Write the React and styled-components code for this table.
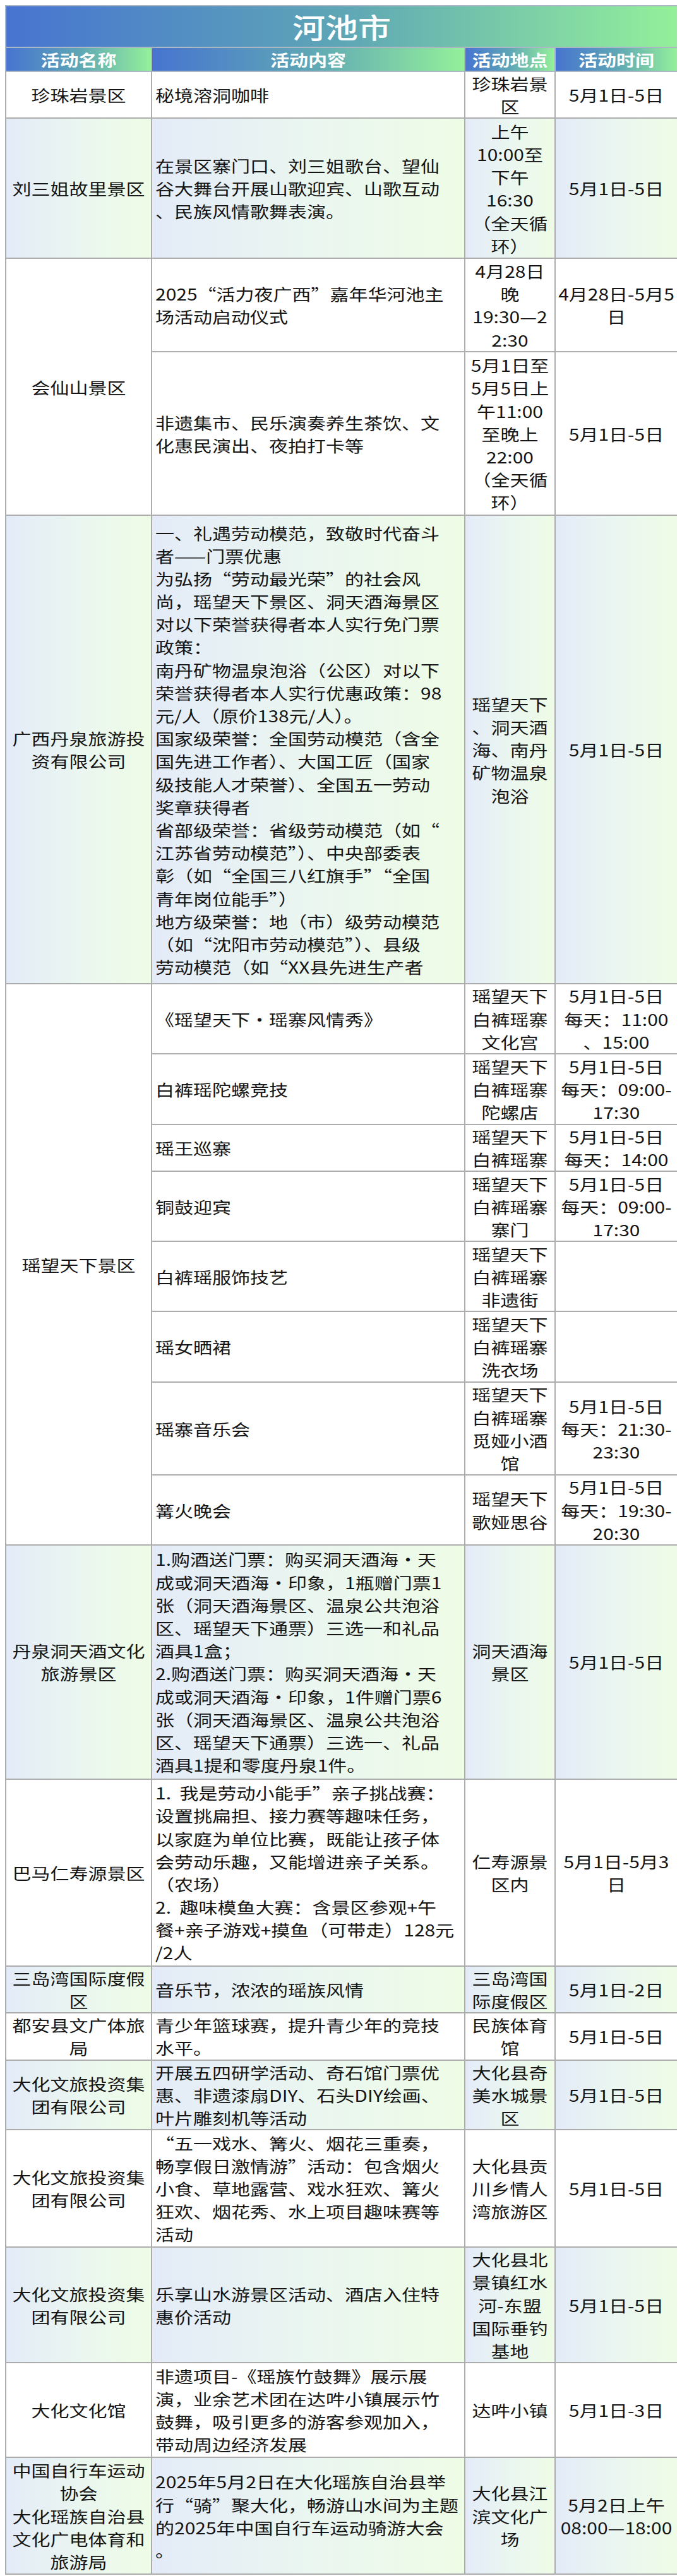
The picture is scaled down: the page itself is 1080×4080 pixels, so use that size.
import React from 'react';
import styled, { createGlobalStyle, css } from 'styled-components';

const GlobalStyle = createGlobalStyle`
  body {
    margin: 8px;
    background: #ffffff;
    font-family: "Noto Sans CJK SC", "Noto Sans", sans-serif;
  }
`;

const Sheet = styled.table`
  width: 1064px;
  table-layout: fixed;
  border-collapse: collapse;
  color: #141414;
`;

const headGradient = css`
  background: linear-gradient(90deg, #4774d0 0%, #5ea6b6 50%, #94f09a 100%);
`;

const TitleCell = styled.th`
  ${headGradient};
  padding: 0;
  border: 2px solid #a9b8c4;
  color: #ffffff;
  font-size: 52px;
  font-weight: 500;
  line-height: 60px;
`;

const HeadCell = styled.th`
  ${headGradient};
  padding: 0;
  border: 2px solid #a9b8c4;
  color: #ffffff;
  font-size: 30px;
  font-weight: 700;
  line-height: 34px;
`;

const Row = styled.tr`
  height: ${p => p.$h}px;
`;

const Cell = styled.td`
  padding: ${p => (p.$align === 'left' ? '0 0 0 5px' : '0 2px')};
  border: 2px solid #adadad;
  vertical-align: middle;
  text-align: ${p => p.$align || 'center'};
  font-size: 30px;
  background: ${p =>
    p.$tint ? 'linear-gradient(90deg, #e4ebf8 0%, #eaf6f0 50%, #eefce6 100%)' : '#ffffff'};
`;

const Line = styled.span`
  display: block;
  height: 36.2px;
  line-height: 36.2px;
  white-space: pre;
  transform: scaleY(0.85);
`;

const Squash = styled.span`
  display: inline-block;
  transform: scaleY(0.85);
`;

const Lines = ({ text }) =>
  text ? text.split('\n').map((l, i) => <Line key={i}>{l}</Line>) : null;

const groups = [
  {
    name: '珍珠岩景区',
    rows: [{ h: 74, content: '秘境溶洞咖啡', place: '珍珠岩景\n区', time: '5月1日-5日' }],
  },
  {
    name: '刘三姐故里景区',
    tint: true,
    rows: [
      {
        h: 222,
        content: '在景区寨门口、刘三姐歌台、望仙\n谷大舞台开展山歌迎宾、山歌互动\n、民族风情歌舞表演。',
        place: '上午\n10:00至\n下午\n16:30\n（全天循\n环）',
        time: '5月1日-5日',
      },
    ],
  },
  {
    name: '会仙山景区',
    rows: [
      {
        h: 148,
        content: '2025“活力夜广西”嘉年华河池主\n场活动启动仪式',
        place: '4月28日\n晚\n19:30—2\n2:30',
        time: '4月28日-5月5\n日',
      },
      {
        h: 259,
        content: '非遗集市、民乐演奏养生茶饮、文\n化惠民演出、夜拍打卡等',
        place: '5月1日至\n5月5日上\n午11:00\n至晚上\n22:00\n（全天循\n环）',
        time: '5月1日-5日',
      },
    ],
  },
  {
    name: '广西丹泉旅游投\n资有限公司',
    tint: true,
    rows: [
      {
        h: 742,
        content: [
          '一、礼遇劳动模范，致敬时代奋斗',
          '者——门票优惠',
          '为弘扬“劳动最光荣”的社会风',
          '尚，瑶望天下景区、洞天酒海景区',
          '对以下荣誉获得者本人实行免门票',
          '政策：',
          '南丹矿物温泉泡浴（公区）对以下',
          '荣誉获得者本人实行优惠政策：98',
          '元/人（原价138元/人）。',
          '国家级荣誉：全国劳动模范（含全',
          '国先进工作者）、大国工匠（国家',
          '级技能人才荣誉）、全国五一劳动',
          '奖章获得者',
          '省部级荣誉：省级劳动模范（如“',
          '江苏省劳动模范”）、中央部委表',
          '彰（如“全国三八红旗手”“全国',
          '青年岗位能手”）',
          '地方级荣誉：地（市）级劳动模范',
          '（如“沈阳市劳动模范”）、县级',
          '劳动模范（如“XX县先进生产者',
        ].join('\n'),
        place: '瑶望天下\n、洞天酒\n海、南丹\n矿物温泉\n泡浴',
        time: '5月1日-5日',
      },
    ],
  },
  {
    name: '瑶望天下景区',
    rows: [
      { h: 110, content: '《瑶望天下•瑶寨风情秀》', place: '瑶望天下\n白裤瑶寨\n文化宫', time: '5月1日-5日\n每天：11:00\n、15:00' },
      { h: 112, content: '白裤瑶陀螺竞技', place: '瑶望天下\n白裤瑶寨\n陀螺店', time: '5月1日-5日\n每天：09:00-\n17:30' },
      { h: 73, content: '瑶王巡寨', place: '瑶望天下\n白裤瑶寨', time: '5月1日-5日\n每天：14:00' },
      { h: 111, content: '铜鼓迎宾', place: '瑶望天下\n白裤瑶寨\n寨门', time: '5月1日-5日\n每天：09:00-\n17:30' },
      { h: 111, content: '白裤瑶服饰技艺', place: '瑶望天下\n白裤瑶寨\n非遗街', time: '' },
      { h: 112, content: '瑶女晒裙', place: '瑶望天下\n白裤瑶寨\n洗衣场', time: '' },
      { h: 147, content: '瑶寨音乐会', place: '瑶望天下\n白裤瑶寨\n觅娅小酒\n馆', time: '5月1日-5日\n每天：21:30-\n23:30' },
      { h: 110, content: '篝火晚会', place: '瑶望天下\n歌娅思谷', time: '5月1日-5日\n每天：19:30-\n20:30' },
    ],
  },
  {
    name: '丹泉洞天酒文化\n旅游景区',
    tint: true,
    rows: [
      {
        h: 371,
        content: [
          '1.购酒送门票：购买洞天酒海·天',
          '成或洞天酒海·印象，1瓶赠门票1',
          '张（洞天酒海景区、温泉公共泡浴',
          '区、瑶望天下通票）三选一和礼品',
          '酒具1盒；',
          '2.购酒送门票：购买洞天酒海·天',
          '成或洞天酒海·印象，1件赠门票6',
          '张（洞天酒海景区、温泉公共泡浴',
          '区、瑶望天下通票）三选一、礼品',
          '酒具1提和零度丹泉1件。',
        ].join('\n'),
        place: '洞天酒海\n景区',
        time: '5月1日-5日',
      },
    ],
  },
  {
    name: '巴马仁寿源景区',
    rows: [
      {
        h: 296,
        content: [
          '1.  我是劳动小能手”亲子挑战赛：',
          '设置挑扁担、接力赛等趣味任务，',
          '以家庭为单位比赛，既能让孩子体',
          '会劳动乐趣，又能增进亲子关系。',
          '（农场）',
          '2.  趣味模鱼大赛：含景区参观+午',
          '餐+亲子游戏+摸鱼（可带走）128元',
          '/2人',
        ].join('\n'),
        place: '仁寿源景\n区内',
        time: '5月1日-5月3\n日',
      },
    ],
  },
  {
    name: '三岛湾国际度假\n区',
    tint: true,
    rows: [{ h: 74, content: '音乐节，浓浓的瑶族风情', place: '三岛湾国\n际度假区', time: '5月1日-2日' }],
  },
  {
    name: '都安县文广体旅\n局',
    rows: [{ h: 74, content: '青少年篮球赛，提升青少年的竞技\n水平。', place: '民族体育\n馆', time: '5月1日-5日' }],
  },
  {
    name: '大化文旅投资集\n团有限公司',
    tint: true,
    rows: [
      {
        h: 110,
        content: '开展五四研学活动、奇石馆门票优\n惠、非遗漆扇DIY、石头DIY绘画、\n叶片雕刻机等活动',
        place: '大化县奇\n美水城景\n区',
        time: '5月1日-5日',
      },
    ],
  },
  {
    name: '大化文旅投资集\n团有限公司',
    rows: [
      {
        h: 186,
        content: '“五一戏水、篝火、烟花三重奏，\n畅享假日激情游”活动：包含烟火\n小食、草地露营、戏水狂欢、篝火\n狂欢、烟花秀、水上项目趣味赛等\n活动',
        place: '大化县贡\n川乡情人\n湾旅游区',
        time: '5月1日-5日',
      },
    ],
  },
  {
    name: '大化文旅投资集\n团有限公司',
    tint: true,
    rows: [
      {
        h: 183,
        content: '乐享山水游景区活动、酒店入住特\n惠价活动',
        place: '大化县北\n景镇红水\n河-东盟\n国际垂钓\n基地',
        time: '5月1日-5日',
      },
    ],
  },
  {
    name: '大化文化馆',
    rows: [
      {
        h: 150,
        content: '非遗项目-《瑶族竹鼓舞》展示展\n演，业余艺术团在达吽小镇展示竹\n鼓舞，吸引更多的游客参观加入，\n带动周边经济发展',
        place: '达吽小镇',
        time: '5月1日-3日',
      },
    ],
  },
  {
    name: '中国自行车运动\n协会\n大化瑶族自治县\n文化广电体育和\n旅游局',
    tint: true,
    rows: [
      {
        h: 185,
        content: '2025年5月2日在大化瑶族自治县举\n行“骑”聚大化，畅游山水间为主题\n的2025年中国自行车运动骑游大会\n。',
        place: '大化县江\n滨文化广\n场',
        time: '5月2日上午\n08:00—18:00',
      },
    ],
  },
];

export default function App() {
  return (
    <>
      <GlobalStyle />
      <Sheet>
        <colgroup>
          <col style={{ width: 231 }} />
          <col style={{ width: 496 }} />
          <col style={{ width: 143 }} />
          <col style={{ width: 194 }} />
        </colgroup>
        <thead>
          <Row $h={66}>
            <TitleCell colSpan={4}>
              <Squash>河池市</Squash>
            </TitleCell>
          </Row>
          <Row $h={38}>
            {['活动名称', '活动内容', '活动地点', '活动时间'].map(h => (
              <HeadCell key={h}>
                <Squash>{h}</Squash>
              </HeadCell>
            ))}
          </Row>
        </thead>
        <tbody>
          {groups.map((g, gi) =>
            g.rows.map((r, ri) => (
              <Row key={`${gi}-${ri}`} $h={r.h}>
                {ri === 0 && (
                  <Cell rowSpan={g.rows.length} $tint={g.tint}>
                    <Lines text={g.name} />
                  </Cell>
                )}
                <Cell $align="left" $tint={g.tint}>
                  <Lines text={r.content} />
                </Cell>
                <Cell $tint={g.tint}>
                  <Lines text={r.place} />
                </Cell>
                <Cell $tint={g.tint}>
                  <Lines text={r.time} />
                </Cell>
              </Row>
            ))
          )}
        </tbody>
      </Sheet>
    </>
  );
}
